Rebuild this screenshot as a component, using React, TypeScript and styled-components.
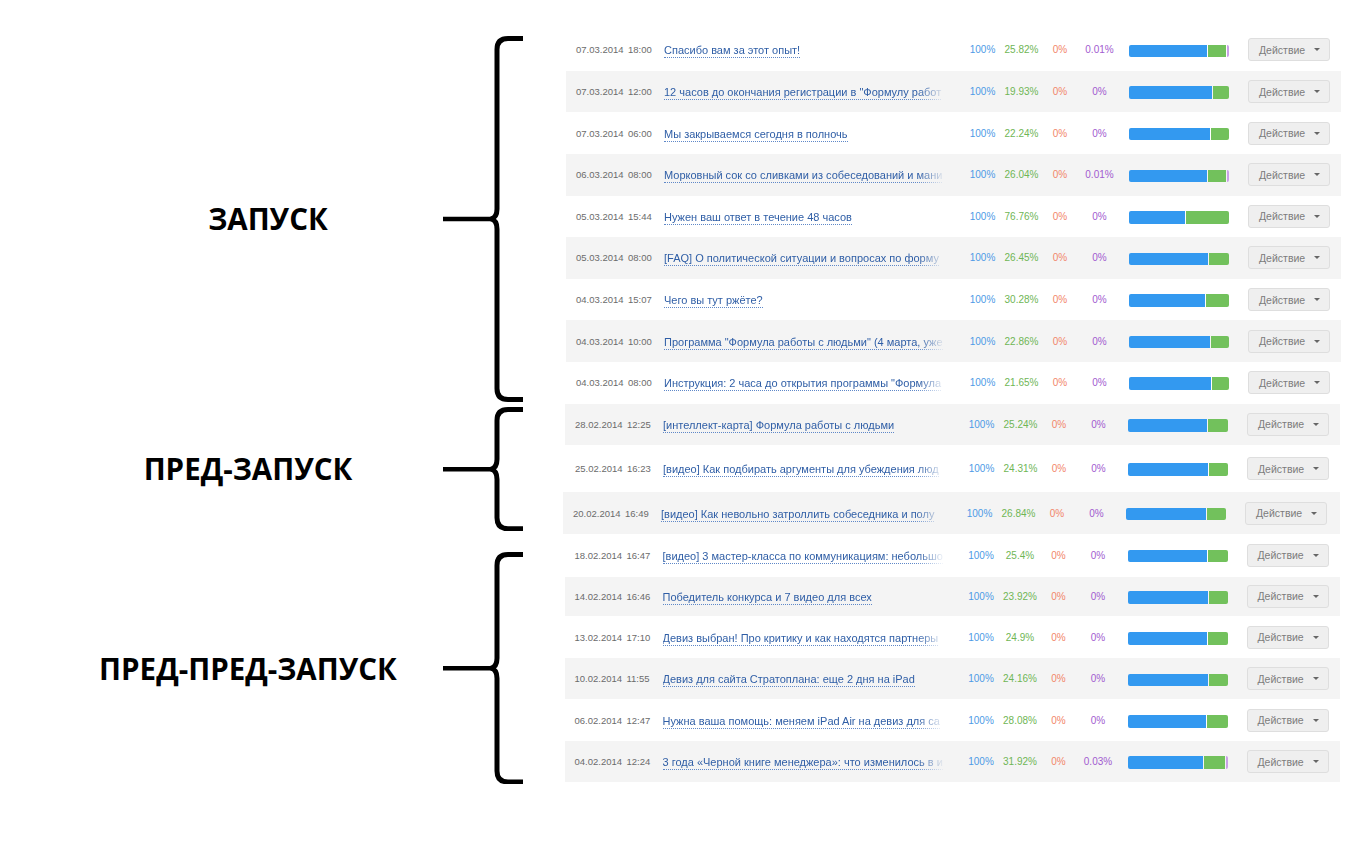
import React from "react";
import styled, { createGlobalStyle } from "styled-components";

const Global = createGlobalStyle`
  html, body { margin: 0; padding: 0; background: #ffffff; }
  body { font-family: "Liberation Sans", Arial, sans-serif; }
`;

type RowData = {
  date: string;
  time: string;
  title: string;
  green: string;
  purple: string;
  blue: number;
  sliver?: boolean;
  h: number;
  dx?: number;
};

type GroupData = {
  label: string;
  labelShift: number;
  tableX: number;
  markTop: number;
  markBottom: number;
  rows: RowData[];
};

const groups: GroupData[] = [
  {
    label: "ЗАПУСК",
    labelShift: 40,
    tableX: 41,
    markTop: 6.5,
    markBottom: 2,
    rows: [
      { date: "07.03.2014", time: "18:00", title: "Спасибо вам за этот опыт!", green: "25.82%", purple: "0.01%", blue: 78, sliver: true, h: 41.6 },
      { date: "07.03.2014", time: "12:00", title: "12 часов до окончания регистрации в \"Формулу работ", green: "19.93%", purple: "0%", blue: 83, h: 41.6 },
      { date: "07.03.2014", time: "06:00", title: "Мы закрываемся сегодня в полночь", green: "22.24%", purple: "0%", blue: 81, h: 41.6 },
      { date: "06.03.2014", time: "08:00", title: "Морковный сок со сливками из собеседований и мани", green: "26.04%", purple: "0.01%", blue: 78, sliver: true, h: 41.6 },
      { date: "05.03.2014", time: "15:44", title: "Нужен ваш ответ в течение 48 часов", green: "76.76%", purple: "0%", blue: 56, h: 41.6 },
      { date: "05.03.2014", time: "08:00", title: "[FAQ] О политической ситуации и вопросах по форму", green: "26.45%", purple: "0%", blue: 79, h: 41.6 },
      { date: "04.03.2014", time: "15:07", title: "Чего вы тут ржёте?", green: "30.28%", purple: "0%", blue: 76, h: 41.6 },
      { date: "04.03.2014", time: "10:00", title: "Программа \"Формула работы с людьми\" (4 марта, уже", green: "22.86%", purple: "0%", blue: 81, h: 41.6 },
      { date: "04.03.2014", time: "08:00", title: "Инструкция: 2 часа до открытия программы \"Формула", green: "21.65%", purple: "0%", blue: 82, h: 41.6 },
    ],
  },
  {
    label: "ПРЕД-ЗАПУСК",
    labelShift: 0,
    tableX: 40,
    markTop: 3,
    markBottom: 3,
    rows: [
      { date: "28.02.2014", time: "12:25", title: "[интеллект-карта] Формула работы с людьми", green: "25.24%", purple: "0%", blue: 79, h: 41.7 },
      { date: "25.02.2014", time: "16:23", title: "[видео] Как подбирать аргументы для убеждения люд", green: "24.31%", purple: "0%", blue: 80, h: 47 },
      { date: "20.02.2014", time: "16:49", title: "[видео] Как невольно затроллить собеседника и полу", green: "26.84%", purple: "0%", blue: 80, h: 41.6, dx: -2 },
    ],
  },
  {
    label: "ПРЕД-ПРЕД-ЗАПУСК",
    labelShift: 0,
    tableX: 39.5,
    markTop: 18,
    markBottom: -2,
    rows: [
      { date: "18.02.2014", time: "16:47", title: "[видео] 3 мастер-класса по коммуникациям: небольшо", green: "25.4%", purple: "0%", blue: 79, h: 42.7 },
      { date: "14.02.2014", time: "16:46", title: "Победитель конкурса и 7 видео для всех", green: "23.92%", purple: "0%", blue: 80, h: 39.7 },
      { date: "13.02.2014", time: "17:10", title: "Девиз выбран! Про критику и как находятся партнеры", green: "24.9%", purple: "0%", blue: 79, h: 42.3 },
      { date: "10.02.2014", time: "11:55", title: "Девиз для сайта Стратоплана: еще 2 дня на iPad", green: "24.16%", purple: "0%", blue: 80, h: 41 },
      { date: "06.02.2014", time: "12:47", title: "Нужна ваша помощь: меняем iPad Air на девиз для са", green: "28.08%", purple: "0%", blue: 78, h: 41.7 },
      { date: "04.02.2014", time: "12:24", title: "3 года «Черной книге менеджера»: что изменилось в и", green: "31.92%", purple: "0.03%", blue: 75, sliver: true, h: 41 },
    ],
  },
];

const Page = styled.main`
  width: 1360px;
  display: flex;
  flex-direction: column;
  padding-top: 29.2px;
`;

const Group = styled.section`
  display: flex;
  align-items: flex-start;
`;

const Marker = styled.div<{ $top: number; $h: number }>`
  flex: 0 0 525px;
  display: flex;
  align-items: center;
  height: ${(p) => p.$h}px;
  margin-top: ${(p) => p.$top}px;
`;

const Label = styled.div<{ $shift: number }>`
  flex: 0 0 440px;
  box-sizing: border-box;
  padding-left: ${(p) => 56 + p.$shift}px;
  text-align: center;
  font-family: "Open Sans", "Noto Sans", sans-serif;
  font-weight: 700;
  font-size: 29.5px;
  color: #000;
  white-space: nowrap;
`;

const BracketSvg = styled.svg`
  flex: 0 0 85px;
  display: block;
`;

const Table = styled.div<{ $x: number }>`
  margin-left: ${(p) => p.$x}px;
  width: 775px;
  display: flex;
  flex-direction: column;
`;

const Row = styled.div<{ $h: number; $alt: boolean; $dx: number }>`
  height: ${(p) => p.$h}px;
  margin-left: ${(p) => p.$dx}px;
  box-sizing: border-box;
  padding: 0 11px 0 10px;
  display: grid;
  grid-template-columns: 52px 36px 299px 39px 39px 38px 50px 119px 82px;
  align-items: center;
  background: ${(p) => (p.$alt ? "#f4f4f4" : "#ffffff")};
`;

const DateText = styled.span`
  font-size: 9.5px;
  color: #6b6b6b;
  white-space: nowrap;
`;

const TitleCell = styled.div`
  width: 282px;
  overflow: hidden;
  white-space: nowrap;
  line-height: 16px;
  -webkit-mask-image: linear-gradient(to right, #000 calc(100% - 28px), transparent 100%);
  mask-image: linear-gradient(to right, #000 calc(100% - 28px), transparent 100%);
`;

const TitleLink = styled.a`
  font-size: 11px;
  color: #2f5ea6;
  text-decoration: none;
  border-bottom: 1px dotted #5f88c8;
  padding-bottom: 1px;
`;

const Num = styled.span<{ $color: string; $pr?: number }>`
  text-align: center;
  font-size: 10px;
  color: ${(p) => p.$color};
  padding-right: ${(p) => p.$pr ?? 0}px;
  white-space: nowrap;
`;

const Bar = styled.div`
  width: 100px;
  height: 12.5px;
  margin-top: 2px;
  display: flex;
  gap: 1px;
  border-radius: 2px;
  overflow: hidden;
`;

const Seg = styled.div<{ $color: string; $grow?: boolean }>`
  background: ${(p) => p.$color};
  flex: ${(p) => (p.$grow ? "1 1 auto" : "0 0 auto")};
`;

const ActionButton = styled.button`
  width: 82px;
  height: 23px;
  box-sizing: border-box;
  border: 1px solid #dedede;
  border-radius: 3px;
  background: #efefef;
  display: flex;
  align-items: center;
  padding: 0 9px 0 10px;
  font-family: "Liberation Sans", Arial, sans-serif;
  font-size: 10.5px;
  color: #7c7c7c;
  cursor: pointer;
`;

const Caret = styled.span`
  margin-left: auto;
  width: 0;
  height: 0;
  border-left: 3px solid transparent;
  border-right: 3px solid transparent;
  border-top: 3.5px solid #666;
`;

function Bracket({ h }: { h: number }) {
  const m = h / 2;
  const d = `M83,2.5 H68 Q57,2.5 57,13.5 V${m - 10} Q57,${m - 1.5} 51,${m} Q57,${m + 1.5} 57,${m + 10} V${h - 13.5} Q57,${h - 2.5} 68,${h - 2.5} H83`;
  return (
    <BracketSvg width={85} height={h} viewBox={`0 0 85 ${h}`}>
      <path d={d} fill="none" stroke="#000" strokeWidth={5} />
      <path d={`M3,${m} H54`} fill="none" stroke="#000" strokeWidth={4.5} />
    </BracketSvg>
  );
}

export default function App() {
  let counter = 0;
  return (
    <>
      <Global />
      <Page>
        {groups.map((g) => {
          const total = g.rows.reduce((s, r) => s + r.h, 0);
          const mh = total - g.markTop - g.markBottom;
          return (
            <Group key={g.label}>
              <Marker $top={g.markTop} $h={mh}>
                <Label $shift={g.labelShift}>{g.label}</Label>
                <Bracket h={mh} />
              </Marker>
              <Table $x={g.tableX}>
                {g.rows.map((r) => {
                  counter += 1;
                  const alt = counter % 2 === 0;
                  return (
                    <Row key={r.date + r.time} $h={r.h} $alt={alt} $dx={r.dx ?? 0}>
                      <DateText>{r.date}</DateText>
                      <DateText>{r.time}</DateText>
                      <TitleCell>
                        <TitleLink href="#">{r.title}</TitleLink>
                      </TitleCell>
                      <Num $color="#4d9ae6">100%</Num>
                      <Num $color="#6fb655">{r.green}</Num>
                      <Num $color="#f2866a">0%</Num>
                      <Num $color="#a25bd0" $pr={9}>{r.purple}</Num>
                      <Bar>
                        <Seg $color="#3399f0" style={{ width: r.blue }} />
                        <Seg $color="#72c15c" $grow />
                        {r.sliver && <Seg $color="#c9a1e6" style={{ width: 2 }} />}
                      </Bar>
                      <ActionButton>
                        Действие
                        <Caret />
                      </ActionButton>
                    </Row>
                  );
                })}
              </Table>
            </Group>
          );
        })}
      </Page>
    </>
  );
}
